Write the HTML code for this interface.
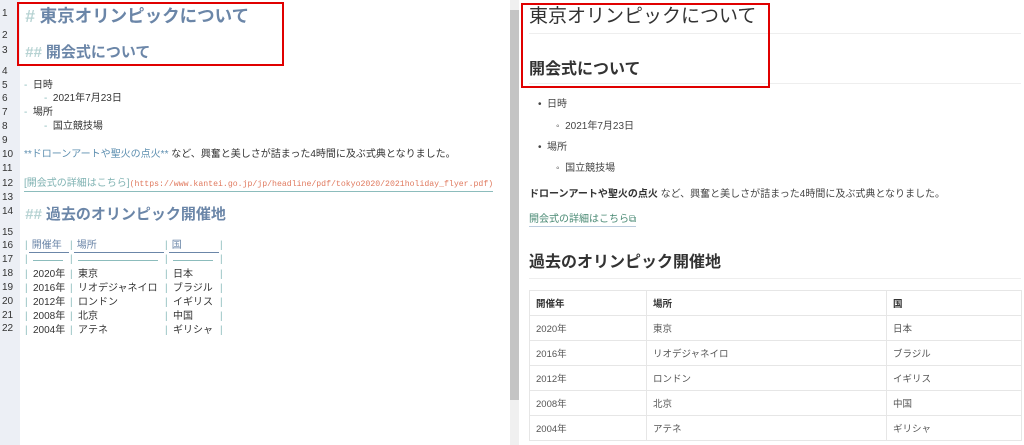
<!DOCTYPE html>
<html><head><meta charset="utf-8"><style>
*{margin:0;padding:0;box-sizing:border-box}
body{width:1024px;height:445px;overflow:hidden;background:#fff;font-family:"Liberation Sans","Noto Sans CJK JP",sans-serif;position:relative;color:#333}
.a{position:absolute;white-space:nowrap}
#gut{position:absolute;left:0;top:0;width:20px;height:445px;background:#eceff5}
.ln{position:absolute;left:2px;font-size:10px;color:#333;line-height:12px}
.ed{font-size:10px;color:#333;line-height:12px}
.h{color:#6b86a8;font-weight:bold}
.hm{color:#b7d3d3;font-style:italic}
.tb{color:#8cbcbc}
.red{border:2px solid #e00000;position:absolute}
.pv{font-size:10px;color:#444;line-height:12px}
.rule{position:absolute;left:529px;width:492px;height:1px;background:#eee}
table{position:absolute;left:529px;top:290px;border-collapse:collapse;font-size:9.5px;color:#555}
td,th{border:1px solid #e6e6e6;height:25px;padding-left:6px;text-align:left;vertical-align:middle}
th{font-weight:bold;color:#333}
.hd{color:#6b86a8;border-bottom:1px solid #6b86a8}
</style></head><body>
<div id="gut"></div>
<div class="ln" style="top:8px">1</div>
<div class="ln" style="top:30px">2</div>
<div class="ln" style="top:45px">3</div>
<div class="ln" style="top:66px">4</div>
<div class="ln" style="top:80px">5</div>
<div class="ln" style="top:93px">6</div>
<div class="ln" style="top:107px">7</div>
<div class="ln" style="top:121px">8</div>
<div class="ln" style="top:135px">9</div>
<div class="ln" style="top:149px">10</div>
<div class="ln" style="top:163px">11</div>
<div class="ln" style="top:178px">12</div>
<div class="ln" style="top:192px">13</div>
<div class="ln" style="top:206px">14</div>
<div class="ln" style="top:227px">15</div>
<div class="ln" style="top:240px">16</div>
<div class="ln" style="top:254px">17</div>
<div class="ln" style="top:268px">18</div>
<div class="ln" style="top:282px">19</div>
<div class="ln" style="top:296px">20</div>
<div class="ln" style="top:310px">21</div>
<div class="ln" style="top:323px">22</div>

<div class="a h" style="left:25px;top:5px;font-size:17.5px;line-height:22px"><span class="hm">#</span> 東京オリンピックについて</div>
<div class="a h" style="left:25px;top:43px;font-size:15px;line-height:20px"><span class="hm">##</span> 開会式について</div>
<div class="a ed" style="left:24px;top:80px"><span class="tb">-</span>&nbsp; 日時</div>
<div class="a ed" style="left:44px;top:93px"><span class="tb">-</span>&nbsp; 2021年7月23日</div>
<div class="a ed" style="left:24px;top:107px"><span class="tb">-</span>&nbsp; 場所</div>
<div class="a ed" style="left:44px;top:121px"><span class="tb">-</span>&nbsp; 国立競技場</div>
<div class="a ed" style="left:24px;top:149px"><span style="color:#5e8fb0">**ドローンアートや聖火の点火**</span> など、興奮と美しさが詰まった4時間に及ぶ式典となりました。</div>
<div class="a ed" style="left:24px;top:178px;border-bottom:1px solid #8cbcbc"><span style="color:#7fb2b2">[開会式の詳細はこちら]</span><span style="color:#e07a5f;font-family:'Liberation Mono','Noto Sans CJK JP',monospace;font-size:8.2px">(https://www.kantei.go.jp/jp/headline/pdf/tokyo2020/2021holiday_flyer.pdf)</span></div>
<div class="a h" style="left:25px;top:205px;font-size:15px;line-height:20px"><span class="hm">##</span> 過去のオリンピック開催地</div>

<div class="a ed tb" style="left:25px;top:240px">|</div><div class="a ed tb" style="left:70px;top:240px">|</div><div class="a ed tb" style="left:165px;top:240px">|</div><div class="a ed tb" style="left:220px;top:240px">|</div>
<div class="a ed hd" style="left:29px;top:240px;width:40px">&nbsp;開催年</div>
<div class="a ed hd" style="left:74px;top:240px;width:90px">&nbsp;場所</div>
<div class="a ed hd" style="left:169px;top:240px;width:50px">&nbsp;国</div>
<div class="a ed tb" style="left:25px;top:254px">|</div><div class="a ed tb" style="left:70px;top:254px">|</div><div class="a ed tb" style="left:165px;top:254px">|</div><div class="a ed tb" style="left:220px;top:254px">|</div>
<div class="a" style="left:33px;top:260px;width:30px;height:1px;background:#8cbcbc"></div>
<div class="a" style="left:78px;top:260px;width:80px;height:1px;background:#8cbcbc"></div>
<div class="a" style="left:173px;top:260px;width:40px;height:1px;background:#8cbcbc"></div>

<div class="a ed tb" style="left:25px;top:268px;line-height:13.9px">|<br>|<br>|<br>|<br>|</div>
<div class="a ed tb" style="left:70px;top:268px;line-height:13.9px">|<br>|<br>|<br>|<br>|</div>
<div class="a ed tb" style="left:165px;top:268px;line-height:13.9px">|<br>|<br>|<br>|<br>|</div>
<div class="a ed tb" style="left:220px;top:268px;line-height:13.9px">|<br>|<br>|<br>|<br>|</div>
<div class="a ed" style="left:33px;top:268px;line-height:13.9px">2020年<br>2016年<br>2012年<br>2008年<br>2004年</div>
<div class="a ed" style="left:78px;top:268px;line-height:13.9px">東京<br>リオデジャネイロ<br>ロンドン<br>北京<br>アテネ</div>
<div class="a ed" style="left:173px;top:268px;line-height:13.9px">日本<br>ブラジル<br>イギリス<br>中国<br>ギリシャ</div>
<div class="red" style="left:17px;top:2px;width:267px;height:64px"></div>

<div style="position:absolute;left:510px;top:0;width:9px;height:445px;background:#f0f0f0"></div>
<div style="position:absolute;left:510px;top:10px;width:9px;height:390px;background:#c4c4c4"></div>

<div class="a" style="left:529px;top:5px;font-size:19px;line-height:24px;color:#333">東京オリンピックについて</div>
<div class="rule" style="top:33px"></div>
<div class="a" style="left:529px;top:60px;font-size:16px;line-height:20px;font-weight:bold;color:#333">開会式について</div>
<div class="rule" style="top:83px"></div>
<div class="a pv" style="left:538px;top:99px">•&nbsp; 日時</div>
<div class="a pv" style="left:556px;top:121px">◦&nbsp; 2021年7月23日</div>
<div class="a pv" style="left:538px;top:142px">•&nbsp; 場所</div>
<div class="a pv" style="left:556px;top:163px">◦&nbsp; 国立競技場</div>
<div class="a pv" style="left:529px;top:189px"><b style="color:#333">ドローンアートや聖火の点火</b> など、興奮と美しさが詰まった4時間に及ぶ式典となりました。</div>
<div class="a pv" style="left:529px;top:214px;color:#4a8a74;border-bottom:1px solid #bcd">開会式の詳細はこちら⧉</div>
<div class="a" style="left:529px;top:253px;font-size:16px;line-height:20px;font-weight:bold;color:#333">過去のオリンピック開催地</div>
<div class="rule" style="top:278px"></div>
<table>
<tr><th style="width:117px">開催年</th><th style="width:240px">場所</th><th style="width:135px">国</th></tr>
<tr><td>2020年</td><td>東京</td><td>日本</td></tr>
<tr><td>2016年</td><td>リオデジャネイロ</td><td>ブラジル</td></tr>
<tr><td>2012年</td><td>ロンドン</td><td>イギリス</td></tr>
<tr><td>2008年</td><td>北京</td><td>中国</td></tr>
<tr><td>2004年</td><td>アテネ</td><td>ギリシャ</td></tr>
</table>
<div class="red" style="left:521px;top:3px;width:249px;height:85px"></div>
</body></html>
